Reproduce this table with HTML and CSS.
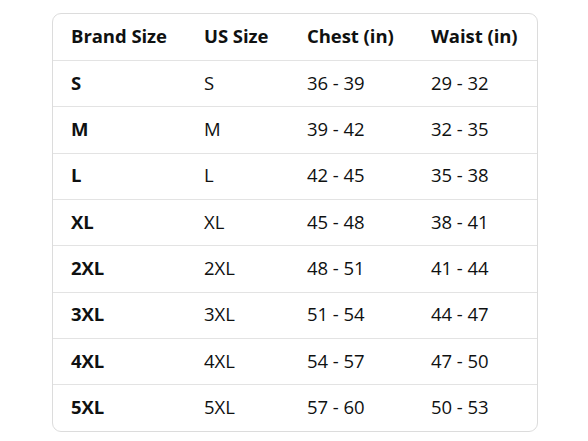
FILE: index.html
```html
<!DOCTYPE html>
<html>
<head>
<meta charset="utf-8">
<link rel="stylesheet" href="styles.css">
</head>
<body>
<div class="card">
  <table class="sizes">
    <colgroup>
      <col class="c1"><col class="c2"><col class="c3"><col class="c4">
    </colgroup>
    <thead>
      <tr><th>Brand Size</th><th>US Size</th><th>Chest (in)</th><th>Waist (in)</th></tr>
    </thead>
    <tbody>
      <tr><td class="b">S</td><td>S</td><td>36 - 39</td><td>29 - 32</td></tr>
      <tr><td class="b">M</td><td>M</td><td>39 - 42</td><td>32 - 35</td></tr>
      <tr><td class="b">L</td><td>L</td><td>42 - 45</td><td>35 - 38</td></tr>
      <tr><td class="b">XL</td><td>XL</td><td>45 - 48</td><td>38 - 41</td></tr>
      <tr><td class="b">2XL</td><td>2XL</td><td>48 - 51</td><td>41 - 44</td></tr>
      <tr><td class="b">3XL</td><td>3XL</td><td>51 - 54</td><td>44 - 47</td></tr>
      <tr><td class="b">4XL</td><td>4XL</td><td>54 - 57</td><td>47 - 50</td></tr>
      <tr><td class="b">5XL</td><td>5XL</td><td>57 - 60</td><td>50 - 53</td></tr>
    </tbody>
  </table>
</div>
</body>
</html>
```
FILE: styles.css
```css
html, body { margin: 0; padding: 0; background: #fff; }
body { padding: 13px 0 0 52px; font-family: "Open Sans", "Noto Sans", sans-serif; color: #0f1111; }
.card {
  width: 484px;
  border: 1px solid #dcdcdc;
  border-radius: 9px;
  overflow: hidden;
}
.sizes { border-collapse: collapse; width: 100%; table-layout: fixed; }
.c1 { width: 133px; } .c2 { width: 103px; } .c3 { width: 124px; } .c4 { width: auto; }
.sizes tr { height: 46.35px; }
.sizes th, .sizes td {
  padding: 0 0 2px 18px;
  text-align: left;
  font-size: 18.5px;
  line-height: 22px;
  letter-spacing: -0.05px;
}
.sizes th { font-weight: 700; }
.sizes td.b { font-weight: 700; }
.sizes tbody tr td { border-top: 1px solid #e3e3e3; }
```
